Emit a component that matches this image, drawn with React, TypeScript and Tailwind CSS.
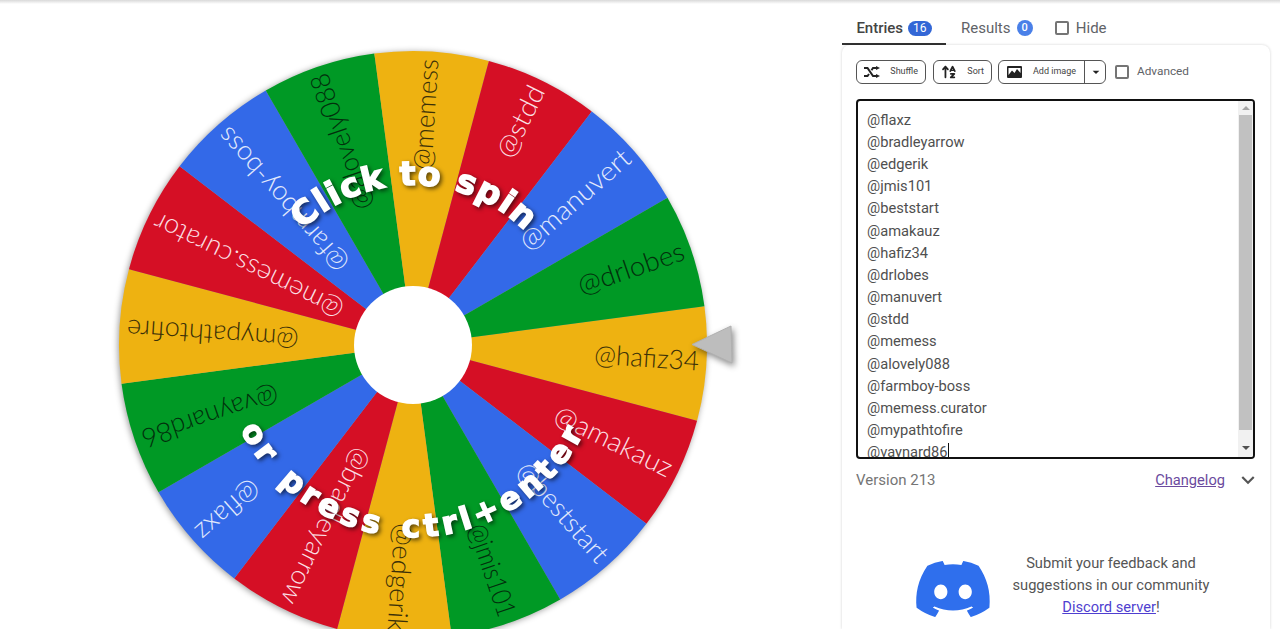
import { FaDiscord, FaArrowUpAZ } from "react-icons/fa6";
import { MdArrowDropDown, MdExpandMore } from "react-icons/md";

const names: [string, number][] = [["@hafiz34",105],["@amakauz",128],["@beststart",124],["@jmis101",96],["@edgerik",108],["@bradleyarrow",171],["@flaxz",77],["@vaynard86",143],["@mypathtofire",172],["@memess.curator",208],["@farmboy-boss",183],["@alovely088",142],["@memess",111],["@stdd",77],["@manuvert",138],["@drlobes",111]];
const colors = ["#EEB211","#D50F25","#3369E8","#009925"];
const textColors = ["#3b3008","#fbdfe3","#e2e9fc","#02300c"];
const entries = ["@flaxz","@bradleyarrow","@edgerik","@jmis101","@beststart","@amakauz","@hafiz34","@drlobes","@manuvert","@stdd","@memess","@alovely088","@farmboy-boss","@memess.curator","@mypathtofire"];

const CX = 413, CY = 345, R = 294, START = 3.7;
function pt(deg: number, r: number) {
  const a = (deg * Math.PI) / 180;
  return `${CX + r * Math.cos(a)} ${CY + r * Math.sin(a)}`;
}

function Wheel() {
  return (
    <svg width="840" height="629" viewBox="0 0 840 629" className="block">
      <defs>
        <path id="arcTop" d={`M ${pt(-150, 160)} A 160 160 0 0 1 ${pt(-30, 160)}`} />
        <path id="arcBottom" d={`M ${pt(165, 192)} A 192 192 0 0 0 ${pt(15, 192)}`} />
      </defs>
      <g className="[filter:drop-shadow(-1px_1px_3px_rgba(0,0,0,0.4))]">
        {names.map((_, i) => {
          const c = START + i * 22.5;
          return <path key={i} d={`M ${CX} ${CY} L ${pt(c - 11.25, R)} A ${R} ${R} 0 0 1 ${pt(c + 11.25, R)} Z`} fill={colors[i % 4]} />;
        })}
      </g>
      {names.map(([n, w], i) => {
        const c = START + i * 22.5;
        return (
          <text key={n} transform={`rotate(${c} ${CX} ${CY})`} x={CX + R - 7.5 - w} y={CY + 7} textLength={w} lengthAdjust="spacingAndGlyphs" fontSize="27" fontFamily="Lato, 'Noto Sans', sans-serif" fill={textColors[i % 4]} className="font-light">
            {n}
          </text>
        );
      })}
      <circle cx={CX} cy={CY} r="59" fill="#fff" />
      <g className="[filter:drop-shadow(2px_2px_2px_rgba(0,0,0,0.6))]" fill="#fff" stroke="#fff" strokeWidth="1.6" fontFamily="'DejaVu Sans', sans-serif" fontWeight="700">
        <text fontSize="33" letterSpacing="1.5"><textPath href="#arcTop" startOffset="50.5%" textAnchor="middle">Click to spin</textPath></text>
        <text fontSize="31" letterSpacing="4.6" wordSpacing="4"><textPath href="#arcBottom" startOffset="50%" textAnchor="middle">or press ctrl+enter</textPath></text>
      </g>
      <path d="M692 344.5 L731 326 L732 363 Z" fill="#bdbdbd" stroke="#b0b0b0" strokeLinejoin="round" className="[filter:drop-shadow(2px_3px_3px_rgba(0,0,0,0.45))]" />
    </svg>
  );
}

function Check({ className = "" }: { className?: string }) {
  return <span className={`block w-[14px] h-[14px] border-2 border-[#757575] rounded-[2px] ${className}`} />;
}

function ShuffleIcon() {
  return (
    <svg width="16" height="12" viewBox="0 0 16 12" fill="none" stroke="#222" strokeWidth="2" className="shrink-0">
      <path d="M0 2 H3.5 L9 10 H12" />
      <path d="M0 10 H3.5 L5 8 M7.5 4.2 L9 2 H12" />
      <path d="M12 0 L16 2 L12 4 Z M12 8 L16 10 L12 12 Z" fill="#222" stroke="none" />
    </svg>
  );
}

function ImageIcon() {
  return (
    <svg width="15" height="12" viewBox="0 0 15 12" className="shrink-0">
      <rect width="15" height="12" rx="1" fill="#222" />
      <path d="M1.5 9 L5 4.5 L7.5 7 L10 3 L13.5 7 V2 H1.5 Z" fill="#fff" />
    </svg>
  );
}

export default function App() {
  return (
    <div className="relative flex w-[1280px] h-[629px] overflow-hidden bg-white font-['Roboto',sans-serif]">
      <div className="absolute inset-x-0 top-0 h-[4px] bg-gradient-to-b from-[#d9d9d9] to-white" />
      <div className="w-[842px] shrink-0"><Wheel /></div>
      <div className="w-[428px] flex flex-col pt-[14px]">
        <div className="flex items-start h-[31px] text-[15px] leading-[28px]">
          <div className="flex items-center justify-center gap-[5px] w-[104px] h-[31px] pb-[1px] border-b-2 border-[#333] text-[#444]">
            <span className="font-medium">Entries</span>
            <span className="rounded-full bg-[#3367d6] text-white text-[12px] leading-[15px] px-[5px]">16</span>
          </div>
          <div className="flex items-center h-[28px] gap-[6px] ml-[15px] text-[#5f6368]">
            <span>Results</span>
            <span className="rounded-full bg-[#4a80e8] text-white text-[11px] font-medium leading-[16px] px-[5px]">0</span>
          </div>
          <Check className="ml-[22px] mt-[7px]" />
          <span className="ml-[7px] text-[#5f6368]">Hide</span>
        </div>
        <div className="flex-1 rounded-t-[8px] shadow-[0_0_3px_rgba(0,0,0,0.18)] px-[14px] pt-[15px]">
          <div className="flex items-center h-[24px] text-[9px] text-[#444]">
            <div className="flex items-center w-[70px] h-[24px] border border-[#555] rounded-[6px] pl-[7px] pr-[7px] justify-between">
              <ShuffleIcon /><span>Shuffle</span>
            </div>
            <div className="flex items-center w-[59px] h-[24px] ml-[7px] border border-[#555] rounded-[6px] pl-[7px] pr-[7px] justify-between">
              <FaArrowUpAZ className="text-[16px] text-[#222]" /><span>Sort</span>
            </div>
            <div className="flex items-center w-[108px] h-[24px] ml-[7px] -translate-x-px border border-[#555] rounded-[6px]">
              <div className="flex items-center justify-between w-[86px] h-full pl-[8px] pr-[8px] border-r border-[#555]">
                <ImageIcon /><span>Add image</span>
              </div>
              <MdArrowDropDown className="text-[16px] text-[#222] ml-[3px]" />
            </div>
            <Check className="ml-[8px]" />
            <span className="ml-[8px] text-[11.8px] text-[#5f6368]">Advanced</span>
          </div>
          <div className="flex w-[399px] h-[360px] mt-[15px] border-2 border-[#111] rounded-[4px] overflow-hidden text-[14.67px] leading-[22.17px] text-[#4f4f4f]">
            <div className="flex-1 pl-[9px] pt-[7.7px]">
              {entries.map((e) => <div key={e}>{e}</div>)}
              <div><span className="border-r border-[#111]">@vaynard86</span></div>
            </div>
            <div className="flex flex-col items-center w-[15px] bg-[#f1f1f1]">
              <div className="mt-[5px] w-0 h-0 border-x-[4px] border-x-transparent border-b-[4px] border-b-[#a3a3a3]" />
              <div className="mt-[5px] w-[13px] h-[315px] bg-[#c1c1c1]" />
              <div className="mt-[16px] w-0 h-0 border-x-[4px] border-x-transparent border-t-[4px] border-t-[#505050]" />
            </div>
          </div>
          <div className="flex items-center h-[20px] mt-[11px] text-[15px] text-[#757575]">
            <span>Version 213</span>
            <span className="ml-auto underline text-[14.67px] text-[#6b4a9e]">Changelog</span>
            <MdExpandMore className="ml-[10px] w-[26px] h-[26px] -mr-[5px] text-[#555]" />
          </div>
          <div className="flex items-center mt-[59px] ml-[57px]">
            <FaDiscord className="w-[80px] h-[80px] text-[#2f6fed] shrink-0" />
            <div className="w-[240px] text-center text-[14.67px] leading-[22px] text-[#555] -ml-[2px] -mt-[9px]">
              <div>Submit your feedback and</div>
              <div>suggestions in our community</div>
              <div><span className="underline text-[#4f3fd0]">Discord server</span>!</div>
            </div>
          </div>
        </div>
      </div>
    </div>
  );
}
